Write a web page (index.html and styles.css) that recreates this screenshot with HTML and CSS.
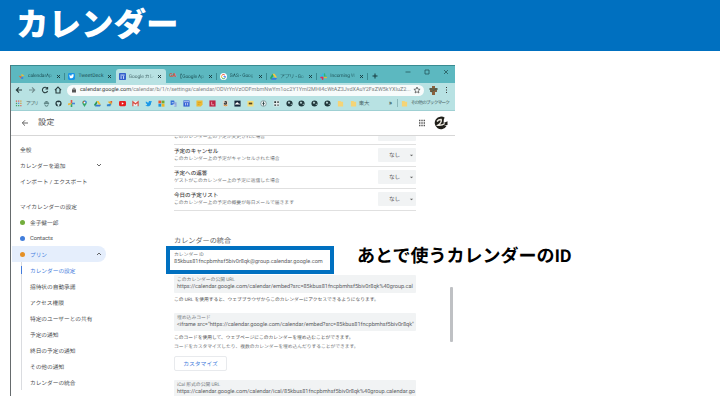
FILE: index.html
```
<!DOCTYPE html>
<html lang="ja">
<head>
<meta charset="utf-8">
<title>カレンダー</title>
<link rel="stylesheet" href="styles.css">
</head>
<body>
<header class="banner"><h1>カレンダー</h1></header>
<div class="slide">
<section class="window">
  <div class="tabs">
    <div class="tab"><svg class="fav" viewBox="0 0 10 10"><path d="M1 4l5 1-2 3z" fill="#e66b35"/><path d="M5 1l4 3-4 1z" fill="#e9bf34"/><circle cx="6" cy="7" r="1.7" fill="#3e86db"/></svg><span class="label">calendarAp</span><svg class="x" viewBox="0 0 5 5"><path d="M1 1l3 3M4 1L1 4"/></svg></div>
    <div class="tab"><svg class="fav" viewBox="0 0 10 10"><rect width="10" height="10" rx="2" fill="#1794e8"/><path d="M2 7c5 2 6-1 6-4L9 2l-2 0c-2-1-2 1-2 2-1 0-2-1-3-2 0 2 0 3 1 4z" fill="#fff"/></svg><span class="label full">TweetDeck</span><svg class="x" viewBox="0 0 5 5"><path d="M1 1l3 3M4 1L1 4"/></svg></div>
    <div class="tab active"><svg class="fav" viewBox="0 0 10 10"><rect width="10" height="10" rx="1" fill="#3460cb"/><path d="M2 3h6M3 4.5v4M6.5 4.5v4" stroke="#dce8ff" stroke-width="1.3"/></svg><span class="label">Google カレ</span><svg class="x" viewBox="0 0 5 5"><path d="M1 1l3 3M4 1L1 4"/></svg></div>
    <div class="tab"><b class="fav ga">GA</b><span class="label"><span class="bracket">【</span>Google Ap</span><svg class="x" viewBox="0 0 5 5"><path d="M1 1l3 3M4 1L1 4"/></svg></div>
    <div class="tab"><svg class="fav" viewBox="0 0 10 10"><circle cx="5" cy="5" r="5" fill="#fff"/><path d="M7 3A3 3 0 0 0 2.4 3.7" stroke="#e84335" stroke-width="1.3" fill="none"/><path d="M2.4 3.7A3 3 0 0 0 2.5 6.6" stroke="#fbbc05" stroke-width="1.3" fill="none"/><path d="M2.5 6.6A3 3 0 0 0 7 7.3" stroke="#34a853" stroke-width="1.3" fill="none"/><path d="M7 7.3L8 5H5" stroke="#4285f4" stroke-width="1.3" fill="none"/></svg><span class="label">GAS - Goog</span><svg class="x" viewBox="0 0 5 5"><path d="M1 1l3 3M4 1L1 4"/></svg></div>
    <div class="tab"><svg class="fav" viewBox="0 0 10 10"><path d="M3.5 1L0 7l1.6 2.5L5 3.5z" fill="#24a764"/><path d="M3.5 1h3L10 6.5H7z" fill="#fbc83c"/><path d="M3 7h7L8.5 9.5h-7z" fill="#3978df"/></svg><span class="label">アプリ - Go</span><svg class="x" viewBox="0 0 5 5"><path d="M1 1l3 3M4 1L1 4"/></svg></div>
    <div class="tab"><svg class="fav" viewBox="0 0 10 10" stroke-width="2" stroke-linecap="round"><path d="M4 1v3M1 4h3" stroke="#36b9e6"/><path d="M6.5 1.5v3M8.5 4.5h0" stroke="#2ab67b"/><path d="M6.5 6.5h2.5" stroke="#e8b33a"/><path d="M3.8 6.5v2.5M1.5 6.5h2" stroke="#e3285e"/></svg><span class="label">Incoming W</span><svg class="x" viewBox="0 0 5 5"><path d="M1 1l3 3M4 1L1 4"/></svg></div>
    <svg class="plus" viewBox="0 0 6 6"><path d="M3 .5v5M.5 3h5" stroke="#17383c" fill="none"/></svg>
    <div class="controls"><svg viewBox="0 0 6 6"><path d="M.5 3h5"/></svg><svg viewBox="0 0 6 6"><path d="M1 1h4v4H1z"/></svg><svg viewBox="0 0 6 6"><path d="M1 1l4 4M5 1L1 5"/></svg></div>
  </div>
  <div class="toolbar">
    <svg class="nav" viewBox="0 0 8 8"><path d="M7 4H1.5M4 1.3L1.3 4 4 6.7"/></svg>
    <svg class="nav dim" viewBox="0 0 8 8"><path d="M1 4h5.5M4 1.3L6.7 4 4 6.7"/></svg>
    <svg class="nav" viewBox="0 0 8 8"><path d="M6.3 2.4A2.7 2.7 0 1 0 6.6 5M6.6 1v2H4.5"/></svg>
    <svg class="nav" viewBox="0 0 8 8"><path d="M.9 4.1L4 1.1l3.1 3M2 3.5V7h4V3.5"/></svg>
    <div class="omnibox"><svg class="lock" viewBox="0 0 6 6"><rect x="1" y="2.5" width="4" height="3" fill="#555"/><path d="M2 3V1.5q1-1 2 0V3" fill="none" stroke="#555" stroke-width=".7"/></svg><span class="url"><b>calendar.google.com</b>/calendar/b/1/r/settings/calendar/ODVrYnVzODFmbmNwYm1oc2Y1Yml2MHI4cWtAZ3JvdXAuY2FsZW5kYXIuZ2...</span><svg class="star" viewBox="0 0 8 8"><path d="M4 1l.9 2.1 2.2.2-1.7 1.5.5 2.2L4 5.8 2.1 7l.5-2.2L.9 3.3l2.2-.2z" fill="none" stroke="#555" stroke-width=".8"/></svg></div>
    <svg class="avatar" viewBox="0 0 9 9"><rect x="1" y="2" width="7" height="4" fill="#796148"/><path d="M3 0h3v9H3z" fill="#8a613d"/><path d="M0 3h9M2 6l5-3" stroke="#465d4c"/></svg>
    <svg class="dots" viewBox="0 0 3 8"><path d="M1 1h1v1H1zM1 3.5h1v1H1zM1 6h1v1H1z" fill="#333"/></svg>
  </div>
  <div class="bookmarks">
    <svg class="bm" viewBox="0 0 8 8" stroke-width="1.5"><path d="M1 1.3h1.4" stroke="#dc6157"/><path d="M3.5 1.3h1.4" stroke="#dc6157"/><path d="M6 1.3h1.4" stroke="#d49b38"/><path d="M1 3.9h1.4" stroke="#49a06c"/><path d="M3.5 3.9h1.4" stroke="#5b8dde"/><path d="M6 3.9h1.4" stroke="#d49b38"/><path d="M1 6.5h1.4M3.5 6.5h1.4" stroke="#49a06c"/><path d="M6 6.5h1.4" stroke="#dc6157"/></svg>
    <span class="apps">アプリ</span>
    <div class="icons">
      <svg viewBox="0 0 8 8"><path d="M1 3q3-4 6 0z" fill="#567b7b"/><path d="M1 4h6M2 5l1 2h2l1-2" stroke="#567b7b" fill="none"/></svg>
      <svg viewBox="0 0 8 8"><circle cx="4" cy="4" r="3.5" fill="#20363a"/><path d="M2.2 2l.8.5h2L5.8 2l.3 2q-.5 1-1.2 1.1V7.3H3.1V5.1Q2 5 1.9 4z" fill="#c4e8e9"/></svg>
      <svg viewBox="0 0 8 8" stroke-width="1.8"><path d="M4 0v4" stroke="#e55245"/><path d="M4 4h4" stroke="#4986df"/><path d="M4 4v4" stroke="#35a46a"/><path d="M0 5l4-1" stroke="#edb63a"/></svg>
      <svg viewBox="0 0 8 8"><path d="M1.5 3a2.5 2.5 0 0 1 5 0c0 2-2 3-2.5 5-.5-2-2.5-3-2.5-5" fill="#34a667"/><path d="M4 .5a2.5 2.5 0 0 1 2.5 2.7L4 4z" fill="#4285e8"/><path d="M1.6 3l2-2.5L4 3z" fill="#e84b3d"/><circle cx="4" cy="3" r="1" fill="#fff"/></svg>
      <svg viewBox="0 0 8 8"><path d="M3 1L0 5.5 1.3 7.5 4 3z" fill="#29955c"/><path d="M3 1h2.2L8 5.5H5.5z" fill="#f3bf38"/><path d="M2.5 5.5H8L6.8 7.5H1.3z" fill="#3978cf"/></svg>
      <svg viewBox="0 0 8 8"><path d="M2 2l5-1-1 5z" fill="#e9ac2a"/><path d="M1 5l5-1-1 3H1z" fill="#3385cc"/><path d="M5 1h2v3z" fill="#dc563d"/></svg>
      <svg viewBox="0 0 8 8"><rect y="1" width="8" height="6" rx="1.5" fill="#e62020"/><path d="M3.2 2.5L5.5 4 3.2 5.5z" fill="#fff"/></svg>
      <svg viewBox="0 0 8 8"><path d="M1 1.5h6v5H1z" fill="#f9eeee"/><path d="M1 7V2l3 2.5L7 2v5" fill="none" stroke="#d64b40" stroke-width="1.3"/></svg>
      <svg viewBox="0 0 8 8"><path d="M.5 6q2 0 2-1Q0 4 1 1.5q1 1.5 3 1.5c0-2 1.5-2.5 2.6-1.5H8L7 3C7 8 2 8 .5 6" fill="#1b98e8"/></svg>
      <svg viewBox="0 0 8 8"><path d="M.5.7h3.2v3.2H.5z" fill="#e8572e"/><path d="M4.2.7h3.2v3.2H4.2z" fill="#72aa30"/><path d="M.5 4.4h3.2v3.2H.5z" fill="#1c96dc"/><path d="M4.2 4.4h3.2v3.2H4.2z" fill="#efb622"/></svg>
      <svg viewBox="0 0 8 8"><path d="M.7.7h4l1.5 5H.7z" fill="#3571d8"/><path d="M4 2.7h3.5v5H5z" fill="#8fa9dc"/><path d="M2 3h2M3 5l3 1" stroke="#fff" stroke-width=".7"/></svg>
      <svg viewBox="0 0 8 8"><rect x=".5" y=".5" width="7" height="7" fill="#315ed3"/><path d="M1 2h6M3 3.4v2.8M5.3 3.4v2.8" stroke="#e4ecff" stroke-width=".9"/></svg>
      <svg viewBox="0 0 8 8"><path d="M.5.5h7v5l-2 2h-5z" fill="#edbb35"/><path d="M2 3h4M2 5h2" stroke="#c59223" stroke-width=".7"/></svg>
      <svg viewBox="0 0 8 8"><path d="M.5.5h7v7h-7z" fill="#bd2445"/><path d="M3 2v3.5h2.8" stroke="#e8a6b1" fill="none"/></svg>
      <svg viewBox="0 0 8 8"><rect x="1" y=".5" width="6" height="7" rx="1" fill="#ddd9ce"/><path d="M3 1.8h2v3H2.7V3.5H5" stroke="#222" fill="none"/><path d="M2 6q2 1 4 0" stroke="#d88b25" fill="none"/></svg>
      <svg viewBox="0 0 8 8"><path d="M.5.7h7v6.8h-7z" fill="#17273a"/><path d="M1 5q0-1 1-1 2-3 3.2 0Q7 4 7 5z" fill="#fff"/></svg>
      <svg viewBox="0 0 8 8"><path d="M.5 1h7v6.4h-7z" fill="#f5dd77"/><path d="M2 3h4v2H2z" fill="#534722"/></svg>
      <svg viewBox="0 0 8 8"><circle cx="4" cy="4" r="3.2" fill="#eaf3f3" stroke="#718789" stroke-width=".8"/><path d="M4 1.8v4.5M2.8 4h2.4" stroke="#253c3e"/></svg>
      <svg viewBox="0 0 8 8"><path d="M.7.7h6.6v6.6H.7z" fill="#e7eeee"/><path d="M1.5 1.5h2v2h-2zM5 1.5h1.5v2H5zM1.5 5h2v1.5h-2zM5 5h1.5v1.5H5z" fill="#263335"/></svg>
      <svg viewBox="0 0 8 8"><circle cx="4" cy="4" r="3.5" fill="#20363a"/><path d="M2 2h2l1 1.5-2 1zM5 5l1.5-1v2z" fill="#b8d5d6"/></svg>
      <svg viewBox="0 0 8 8"><circle cx="4" cy="4" r="3.5" fill="#20363a"/><path d="M2 2h2l1 1.5-2 1zM5 5l1.5-1v2z" fill="#b8d5d6"/></svg>
      <svg viewBox="0 0 8 8"><circle cx="4" cy="4" r="3.5" fill="#20363a"/><path d="M2 2h2l1 1.5-2 1zM5 5l1.5-1v2z" fill="#b8d5d6"/></svg>
      <svg viewBox="0 0 8 8"><circle cx="4" cy="4" r="3.5" fill="#20363a"/><path d="M2 2h2l1 1.5-2 1zM5 5l1.5-1v2z" fill="#b8d5d6"/></svg>
      <svg viewBox="0 0 8 8"><path d="M1 1h3l.7 1H7v5.3H1z" fill="#f5d477"/></svg>
      <svg viewBox="0 0 8 8"><path d="M1 1h3l.7 1H7v5.3H1z" fill="#f5d477"/></svg>
    </div>
    <span class="todai">東大</span><span class="more">»</span><i class="bar"></i>
    <svg class="folder" viewBox="0 0 8 8"><path d="M1 1h3l.7 1H7v5.3H1z" fill="#f5d477"/></svg><span class="others">その他のブックマーク</span>
  </div>
  <div class="apphead">
    <svg class="back" viewBox="0 0 8 8"><path d="M7 4H1.5M4 1.3L1.3 4 4 6.7" fill="none" stroke="#555" stroke-width=".9"/></svg>
    <h2>設定</h2>
    <svg class="grid" viewBox="0 0 8 8"><path d="M1 1.5h6M1 4h6M1 6.5h6" stroke="#555" stroke-width="1.4" stroke-dasharray="1.4 .9"/></svg>
    <svg class="user" viewBox="0 0 14 14"><path d="M11 2A6.3 6.3 0 1 0 12.5 10L10 9.4 13.5 9V5.2L9.7 7Q9.5 1.5 11 2z" fill="#201e19"/><path d="M3 5.5Q4.5 3.3 7.2 3.5 8 6.5 4 9.2q4 .4 6.7-1.7" fill="none" stroke="#eeeae1" stroke-width="1.4"/></svg>
  </div>
  <div class="body">
    <nav class="side">
      <div class="item">全般</div>
      <div class="item">カレンダーを追加<svg class="chev" viewBox="0 0 6 6"><path d="M1 2l2 2 2-2"/></svg></div>
      <div class="item">インポート / エクスポート</div>
      <div class="item group">マイカレンダーの設定</div>
      <div class="item"><i class="dot green"></i>金子健一郎</div>
      <div class="item"><i class="dot blue"></i><span class="latin">Contacts</span></div>
      <div class="item selected"><i class="dot orange"></i>プリン<svg class="chev" viewBox="0 0 6 6"><path d="M1 4l2-2 2 2"/></svg></div>
      <div class="sub">
        <div class="item current">カレンダーの設定</div><div class="item">招待状の自動承諾</div><div class="item">アクセス権限</div><div class="item">特定のユーザーとの共有</div><div class="item">予定の通知</div><div class="item">終日の予定の通知</div><div class="item">その他の通知</div><div class="item">カレンダーの統合</div>
      </div>
    </nav>
    <main class="main">
      <div class="notice first"><div><p>このカレンダー上の予定が変更された場合</p></div><div class="select"></div></div>
      <div class="notice"><div><h3>予定のキャンセル</h3><p>このカレンダー上の予定がキャンセルされた場合</p></div><div class="select">なし<svg viewBox="0 0 6 6"><path d="M1 2l2 2 2-2z"/></svg></div></div>
      <div class="notice"><div><h3>予定への返答</h3><p>ゲストがこのカレンダー上の予定に返信した場合</p></div><div class="select">なし<svg viewBox="0 0 6 6"><path d="M1 2l2 2 2-2z"/></svg></div></div>
      <div class="notice"><div><h3>今日の予定リスト</h3><p>このカレンダー上の予定の概要が毎日メールで届きます</p></div><div class="select">なし<svg viewBox="0 0 6 6"><path d="M1 2l2 2 2-2z"/></svg></div></div>
      <h2 class="section">カレンダーの統合</h2>
      <div class="highlight"><small>カレンダー ID</small><span class="cid">85kbus81fncpbmhsf5biv0r8qk@group.calendar.google.com</span></div>
      <div class="field one"><small>このカレンダーの公開 URL</small><span class="u1">https://calendar.google.com/calendar/embed?src=85kbus81fncpbmhsf5biv0r8qk%40group.cal</span></div>
      <p class="desc d1">この URL を使用すると、ウェブブラウザからこのカレンダーにアクセスできるようになります。</p>
      <div class="field two"><small>埋め込みコード</small><span class="u2">&lt;iframe src="https://calendar.google.com/calendar/embed?src=85kbus81fncpbmhsf5biv0r8qk"</span></div>
      <p class="desc d2">このコードを使用して、ウェブページにこのカレンダーを埋め込むことができます。</p>
      <p class="desc d3">コードをカスタマイズしたり、複数のカレンダーを埋め込んだりすることができます。</p>
      <div class="button">カスタマイズ</div>
      <div class="field three"><small>iCal 形式の公開 URL</small><span class="u3">https://calendar.google.com/calendar/ical/85kbus81fncpbmhsf5biv0r8qk%40group.calendar.go</span></div>
    </main>
    <div class="scroll"><i></i></div>
  </div>
</section>
<aside class="callout">あとで使うカレンダーの<span>ID</span></aside>
</div>
</body>
</html>
```
FILE: styles.css
```
* { box-sizing: border-box; }
body { margin: 0; width: 720px; height: 405px; overflow: hidden; background: #fff; font-family: Roboto, "Noto Sans CJK JP", sans-serif; white-space: nowrap; text-rendering: geometricPrecision; }
h1, h2, h3, p { margin: 0; }
svg { display: block; flex: none; }
i { font-style: normal; }
.banner { height: 51px; background: #0070c0; padding-left: 16px; color: #fff; }
.banner h1 { font: 900 32.5px/46px "Noto Sans CJK JP", sans-serif; }
.slide { display: flex; }
.window { width: 445px; height: 331px; margin: 14px 0 0 10px; border-left: 1px solid #666b6d; border-top: 1px solid #398b91; overflow: hidden; flex: none; }

.tabs { height: 17px; background: #5cb8c0; display: flex; padding: 3px 0 0 4px; }
.tab { width: 50.4px; height: 14px; padding: 0 4px 0 3px; display: flex; align-items: center; font-size: 4.9px; color: #21565b; position: relative; flex: none; }
.tab::after { content: ""; position: absolute; right: 0; top: 4px; height: 7px; width: 1px; background: #3c8b92; }
.tab.active { background: #b8e2e3; border-radius: 3px 3px 0 0; color: #4d6f72; }
.tab.active::after, .tab:nth-child(2)::after { display: none; }
.fav { width: 7px; height: 7px; margin-right: 3px; flex: none; }
.ga { font-size: 5.5px; line-height: 7px; color: #d35a4a; letter-spacing: -.5px; }
.label { letter-spacing: -.1px; -webkit-mask-image: linear-gradient(90deg, #000 80%, rgba(0,0,0,.35)); }
.label.full { -webkit-mask-image: none; font-size: 5.1px; letter-spacing: 0; }
.bracket { display: inline-block; width: 2.6px; text-indent: -2px; margin-right: .4px; }
.x { width: 5px; height: 5px; margin-left: auto; stroke: #163639; stroke-width: .9; }
.plus { width: 6px; height: 6px; margin: 4px 0 0 4px; }
.controls { margin-left: auto; display: flex; gap: 13px; padding: 0 6px 0 0; }
.controls svg { width: 6px; height: 6px; fill: none; stroke: #24575b; stroke-width: .8; }

.toolbar { height: 14px; background: #b8e2e3; display: flex; align-items: center; padding-left: 4px; }
.nav { width: 8px; height: 8px; margin-right: 5px; fill: none; stroke: #283c3e; stroke-width: 1.1; }
.nav.dim { stroke: #728e90; }
.omnibox { width: 357px; height: 11px; border-radius: 6px; background: #f7fbfb; display: flex; align-items: center; padding: 0 3px 0 4px; }
.lock { width: 6px; height: 6px; margin-right: 3px; }
.url { font-size: 5.47px; color: #7a8182; }
.url b { color: #353b3c; font-weight: 400; }
.star { width: 8px; height: 8px; margin-left: auto; }
.avatar { width: 9px; height: 9px; margin-left: 5px; }
.dots { width: 3px; height: 8px; margin-left: 7px; }

.bookmarks { height: 14px; background: #b8e2e3; border-bottom: 1px solid #9fd0d3; display: flex; align-items: center; padding: 0 0 1px 4px; font-size: 4.7px; color: #4a6263; }
.bm, .icons svg { width: 7px; height: 7px; }
.apps { width: 20.5px; padding-left: 4px; font-size: 4.8px; letter-spacing: -.9px; }
.icons { display: flex; gap: 5.8px; }
.todai { font-size: 5.4px; width: 32px; padding-left: 2px; }
.more { font-size: 7px; color: #243b3d; width: 8px; }
.bar { width: 1px; height: 8px; background: #8bb8bb; }
.folder { width: 7px; height: 7px; margin: 0 3px; }
.others { letter-spacing: -.85px; }

.apphead { height: 25px; border-bottom: 1px solid #d7d7d7; display: flex; align-items: center; padding: 0 7px 0 10px; position: relative; z-index: 1; background: #fff; }
.back { width: 8px; height: 8px; margin-right: 9px; }
.apphead h2 { font-size: 8.2px; font-weight: 400; color: #555; line-height: 10px; }
.grid { width: 8px; height: 8px; margin-left: auto; }
.user { width: 14px; height: 14px; margin-left: 8px; }

.body { height: 261px; display: flex; }
.side { width: 95px; margin-right: 68px; padding-top: 5px; font-size: 5.7px; color: #4b4d50; flex: none; }
.item { height: 16px; display: flex; align-items: center; padding-left: 9px; }
.item.group { margin-top: 9px; }
.dot { width: 5px; height: 5px; border-radius: 50%; margin-right: 5px; }
.green { background: #73ad3c; }
.blue { background: #427edb; }
.orange { background: #e59025; }
.chev { width: 6px; height: 6px; margin-left: auto; margin-right: 4px; fill: none; stroke: #555; stroke-width: .9; }
.selected { background: #e5eefc; color: #427bdc; border-radius: 0 8px 8px 0; margin-left: 1px; padding-left: 8px; height: 16px; }
.latin { font-size: 5.7px; line-height: 6px; padding-top: 1px; }
.sub { margin-left: 10px; border-left: 1px solid #dadce0; }
.sub .item { padding-left: 8px; }
.sub .current { color: #427bdc; position: relative; }
.current::before { content: ""; position: absolute; left: -1px; top: 4px; width: 1px; height: 8px; background: #427bdc; }

.main { width: 242px; flex: none; }
.notice { height: 22px; border-bottom: 1px solid #e0e0e0; display: flex; justify-content: space-between; }
.notice.first { height: 9px; }
.notice h3 { font-size: 5.55px; line-height: 7px; font-weight: 500; color: #444; margin-top: 4px; }
.notice p { font-size: 4.8px; line-height: 7px; color: #74777a; }
.notice.first p { margin-top: -2px; }
.select { width: 38px; height: 14px; margin-top: 3px; background: #f1f3f4; border-radius: 1px; display: flex; align-items: center; font-size: 5.6px; color: #444; padding-left: 11px; }
.first .select { height: 5px; margin-top: 0; }
.select svg { width: 5px; height: 5px; margin: 0 2px 0 auto; fill: #666; }
.section { font-size: 7.15px; line-height: 10px; font-weight: 400; color: #666; margin-top: 25px; }
.highlight { width: 168px; height: 28px; margin: 0 0 0 -8px; border: 4px solid #0070c0; padding: 2px 0 0 4px; background: #fff; position: relative; }
.main small { display: block; font-size: 4.8px; line-height: 7px; color: #73777a; }
.highlight span, .field span { display: block; line-height: 6px; color: #5c6063; }
.highlight .cid { font-size: 5.58px; line-height: 7px; }
.field { height: 18px; background: #f1f3f4; padding: 1.5px 0 0 3px; border-radius: 1px; }
.field span { font-size: 5.58px; line-height: 7px; }
.one { margin-top: 1px; }
.desc { font-size: 4.75px; line-height: 9px; color: #555; }
.d1 { margin: 3px 0 8px; }
.d2 { margin-top: 3px; }
.d3 { color: #707376; }
.button { width: 53px; height: 15px; border: 1px solid #e8eaed; border-radius: 2px; color: #427bdc; font-size: 5.8px; display: flex; align-items: center; justify-content: center; margin: 4px 0 9px; }
.scroll { margin-left: auto; width: 6px; padding: 151px 2px 0 1px; }
.scroll i { display: block; height: 55px; width: 3px; border-radius: 1px; background: #bfc1c4; }
.callout { margin: 190px 0 0 -98px; font: 700 18px/27px "Noto Sans CJK JP", sans-serif; color: #000; position: relative; }
.callout span { font-size: 17px; letter-spacing: -.6px; }
```
